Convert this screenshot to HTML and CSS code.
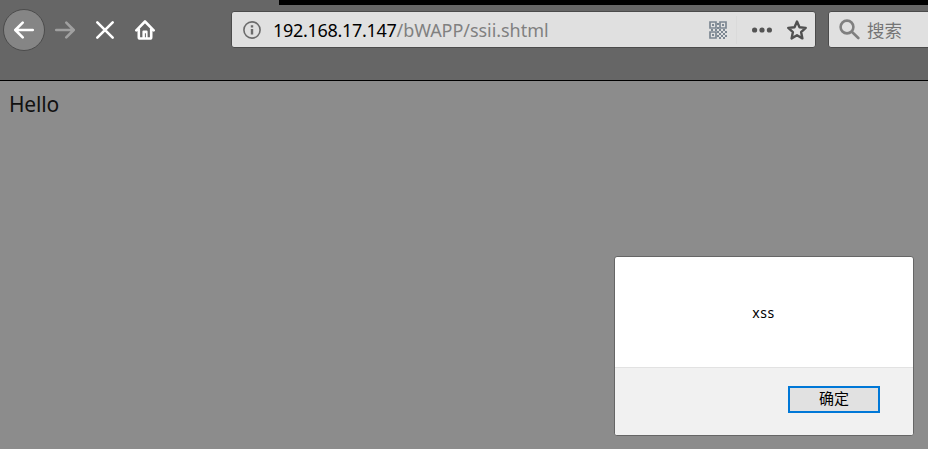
FILE: index.html
```html
<!DOCTYPE html>
<html lang="zh-CN">
<head>
<meta charset="utf-8">
<title>ssii.shtml</title>
<link rel="stylesheet" href="styles.css">
</head>
<body>
<header class="browser">
  <div class="tab-strip"></div>
  <div class="toolbar">
    <nav class="nav">
      <button class="back" aria-label="Back"><svg width="20" height="18" viewBox="0 0 20 18"><path d="M18.8 9H1.6M8.7 1.6 1.3 9l7.4 7.4"/></svg></button>
      <svg class="forward" width="20" height="18" viewBox="0 0 20 18"><path d="M1.2 9H18M11.3 1.6 18.7 9l-7.4 7.4"/></svg>
      <svg class="stop" width="20" height="20" viewBox="0 0 20 20"><path d="m2.3 2.3 15.4 15.4M17.7 2.3 2.3 17.7"/></svg>
      <svg class="home" width="20" height="20" viewBox="0 0 20 20"><path d="M1.3 10.3 10 1.5l8.7 8.8M3.8 9v8.2q0 1.3 1.3 1.3h9.8q1.3 0 1.3-1.3V9"/><path class="door" d="M7.4 18.5V11.5q0-1 1-1h3.2q1 0 1 1v7h-1.7v-5.2h-1v5.2z"/></svg>
    </nav>
    <div class="field address">
      <svg class="info" width="18" height="18" viewBox="0 0 18 18"><circle cx="9" cy="9" r="8.1"/><path d="M9 8v5.5M9 4.2v2.4"/></svg>
      <div class="url"><span class="host">192.168.17.147</span><span class="path">/bWAPP/ssii.shtml</span></div>
      <svg class="qr" width="18" height="18" viewBox="0 0 18 18"><path class="line" d="M1 1h6v6H1zM11 1h6v6h-6zM1 11h6v6H1z"/><path class="fill" d="M3 3h2v2H3zM13 3h2v2h-2zM3 13h2v2H3zM8 2h2v2H8zM8 6h2v2H8zM2 8h2v2H2zM6 8h2v2H6zM10 8h2v2h-2zM14 8h2v2h-2zM8 10h2v2H8zM12 10h2v2h-2zM16 10h2v2h-2zM10 12h2v2h-2zM14 12h2v2h-2zM8 14h2v2H8zM12 14h2v2h-2zM16 14h2v2h-2zM10 16h2v2h-2zM14 16h2v2h-2z"/></svg>
      <span class="divider"></span>
      <svg class="more" width="20" height="6" viewBox="0 0 20 6"><circle cx="2.6" cy="3" r="2.6"/><circle cx="10" cy="3" r="2.6"/><circle cx="17.4" cy="3" r="2.6"/></svg>
      <svg class="star" width="20" height="20" viewBox="0 0 20 20"><path d="m10 1.6 2.5 5.6 6.2.7-4.6 4.2 1.3 6.3-5.4-3.2-5.4 3.2 1.3-6.3-4.6-4.2 6.2-.7z"/></svg>
    </div>
    <div class="field search">
      <svg class="glass" width="21" height="21" viewBox="0 0 21 21"><circle cx="8" cy="8" r="6.4"/><path d="m12.8 12.8 6.5 6.2"/></svg>
      <span>搜索</span>
    </div>
  </div>
</header>
<main>Hello</main>
<section class="dialog" role="dialog">
  <div class="message">xss</div>
  <footer><button class="ok">确定</button></footer>
</section>
</body>
</html>
```
FILE: styles.css
```css
* { box-sizing: border-box; }
body {
  margin: 0;
  height: 449px;
  overflow: hidden;
  background: #8c8c8c;
  font-family: "Noto Sans", "Noto Sans CJK SC", sans-serif;
}
svg { display: block; flex: none; fill: none; stroke-linecap: round; stroke-linejoin: round; }
.browser { height: 81px; background: #666; border-bottom: 1px solid #000; }
.tab-strip { height: 5px; margin-left: 279px; background: #000; }
.toolbar { display: flex; height: 49px; align-items: center; }
.nav { display: flex; align-items: center; width: 231px; flex: none; padding-left: 3px; }
.nav svg { stroke: #fff; stroke-width: 2.6; }
.back {
  display: flex; align-items: center; justify-content: center;
  width: 42px; height: 42px; padding: 0;
  border: 1px solid #4c4c4c; border-radius: 50%; background: #858585;
}
.nav .forward { margin-left: 10px; stroke: #a0a0a0; }
.stop { margin-left: 20px; }
.home { margin-left: 20px; }
.nav .door { fill: #fff; stroke: none; }
.field {
  display: flex; align-items: center; flex: none;
  height: 37px; border: 1px solid #4b4b4b; border-radius: 3px; background: #e0e0e0;
}
.address { width: 585px; padding: 0 8px 0 11px; }
.info { stroke: #6b6b6b; stroke-width: 1.6; }
.info path { stroke-width: 2.4; stroke-linecap: butt; }
.url { flex: 1; margin-left: 12px; font-size: 18px; line-height: 34px; white-space: nowrap; }
.host { color: #000; letter-spacing: -0.3px; }
.path { color: #808080; letter-spacing: -0.05px; }
.qr .line { stroke: #7c8792; stroke-width: 1.7; stroke-linejoin: miter; }
.qr .fill { fill: #7c8792; }
.divider { width: 1px; height: 28px; margin: 0 15px 0 9px; background: #dadada; }
.more { fill: #545454; }
.star { margin-left: 15px; stroke: #505050; stroke-width: 2.4; }
.search { width: 120px; margin-left: 12px; padding-left: 10px; color: #757575; font-size: 17.5px; }
.search span { margin-left: 7px; }
.glass { stroke: #808080; stroke-width: 2.6; }
main { padding: 8px 9px; color: #111; font-size: 21px; line-height: 30px; letter-spacing: -0.2px; }
.dialog {
  position: absolute; left: 614px; top: 256px; width: 300px; height: 180px;
  overflow: hidden; border: 1px solid #666; border-radius: 3px; background: #fff;
}
.message {
  height: 110px; padding-right: 1px; line-height: 112px;
  text-align: center; font-size: 14px; letter-spacing: 0.5px; color: #000;
}
footer {
  display: flex; justify-content: flex-end; align-items: flex-start; height: 68px;
  padding: 18px 33px 0; border-top: 1px solid #e2e2e2; background: #f1f1f1;
}
.ok {
  width: 92px; height: 27px; padding: 0 0 3px; border: 2px solid #0078d7; background: #e1e1e1;
  color: #000; font: 15px/20px "Noto Sans CJK SC", sans-serif;
}
```
